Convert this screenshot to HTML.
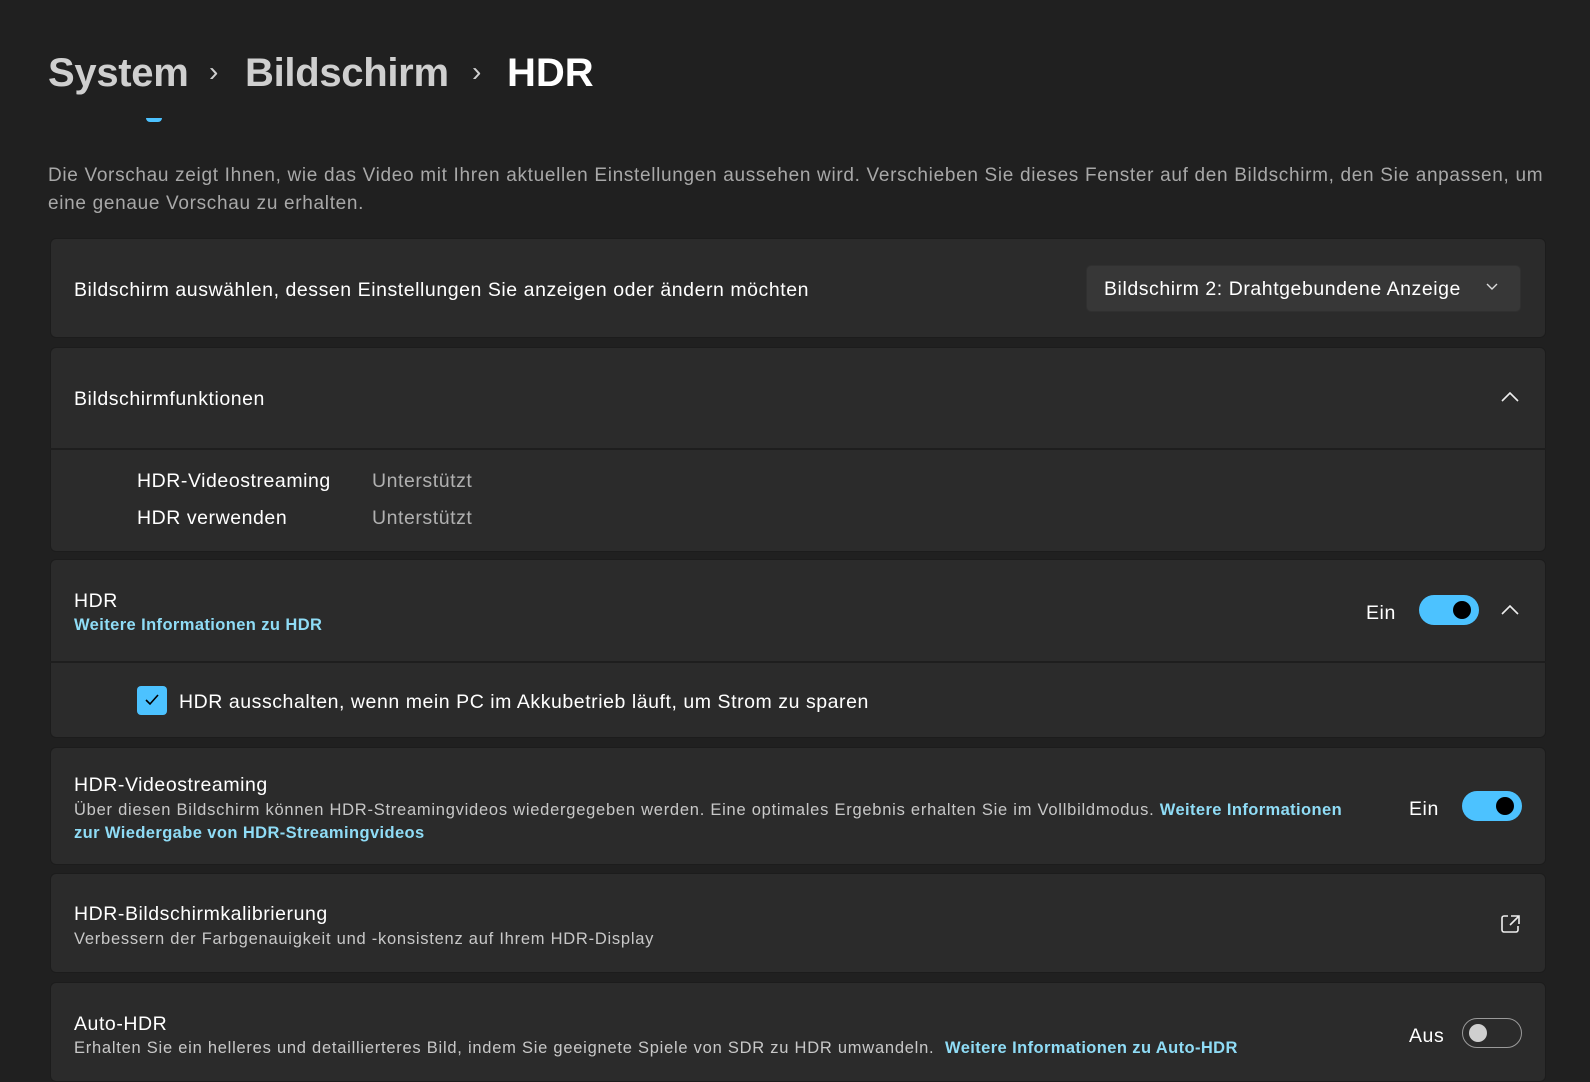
<!DOCTYPE html>
<html><head><meta charset="utf-8"><style>
*{margin:0;padding:0;box-sizing:border-box}
body{width:1590px;height:1062px;background:#202020;font-family:"Liberation Sans",sans-serif;color:#fff;position:relative;overflow:hidden}
.a{position:absolute;white-space:nowrap}
.card{position:absolute;left:50px;width:1496px;background:#2b2b2b;border:1px solid #1c1c1c;border-radius:6px}
.t{font-size:19.5px;color:#fff;letter-spacing:0.55px}
.s{font-size:16.5px;color:#c8c8c8;letter-spacing:0.75px}
.l{color:#8fdcf6;font-weight:bold;letter-spacing:0.4px}
.tog{position:absolute;width:60px;height:30px;border-radius:15px;background:#4cc2ff}
.tog::after{content:"";position:absolute;right:8px;top:6px;width:18px;height:18px;border-radius:50%;background:#000}
.off{background:transparent;border:1.5px solid #9a9a9a}
.off::after{left:6px;right:auto;top:5px;background:#cfcfcf}
.sep{position:absolute;left:50px;width:1496px;height:2px;background:#1e1e1e}
</style></head><body>
<div class="a" style="left:48px;top:51px;font-size:40px;font-weight:bold;color:#cfcfcf;letter-spacing:-0.3px">System</div>
<div class="a" style="left:209px;top:56px;font-size:28px;color:#cfcfcf">›</div>
<div class="a" style="left:245px;top:51px;font-size:40px;font-weight:bold;color:#cfcfcf;letter-spacing:-0.3px">Bildschirm</div>
<div class="a" style="left:472px;top:56px;font-size:28px;color:#cfcfcf">›</div>
<div class="a" style="left:507px;top:51px;font-size:40px;font-weight:bold;color:#fff">HDR</div>
<div class="a" style="left:146px;top:118px;width:16px;height:4px;border-radius:0 0 8px 8px;background:#4cc2ff"></div>
<div class="a" style="left:48px;top:162px;font-size:19px;color:#a8a8a8;line-height:28px;white-space:normal;width:1500px;letter-spacing:0.68px">Die Vorschau zeigt Ihnen, wie das Video mit Ihren aktuellen Einstellungen aussehen wird. Verschieben Sie dieses Fenster auf den Bildschirm, den Sie anpassen, um eine genaue Vorschau zu erhalten.</div>

<div class="card" style="top:238px;height:100px"></div>
<div class="a t" style="left:74px;top:279px">Bildschirm auswählen, dessen Einstellungen Sie anzeigen oder ändern möchten</div>
<div class="a" style="left:1086px;top:265px;width:435px;height:47px;background:#373737;border-radius:5px;border:1px solid #303030"></div>
<div class="a t" style="left:1104px;top:278px">Bildschirm 2: Drahtgebundene Anzeige</div>
<svg class="a" style="left:1485px;top:282px" width="14" height="10"><path d="M2 2l5 5 5-5" stroke="#ddd" stroke-width="1.4" fill="none"/></svg>

<div class="card" style="top:347px;height:205px"></div>
<div class="sep" style="top:448px"></div>
<div class="a t" style="left:74px;top:388px">Bildschirmfunktionen</div>
<svg class="a" style="left:1500px;top:391px" width="20" height="12"><path d="M2 10l8-8 8 8" stroke="#eee" stroke-width="1.6" fill="none"/></svg>
<div class="a t" style="left:137px;top:470px">HDR-Videostreaming</div>
<div class="a t" style="left:137px;top:507px">HDR verwenden</div>
<div class="a t" style="left:372px;top:470px;color:#b0b0b0">Unterstützt</div>
<div class="a t" style="left:372px;top:507px;color:#b0b0b0">Unterstützt</div>

<div class="card" style="top:559px;height:179px"></div>
<div class="sep" style="top:661px"></div>
<div class="a t" style="left:74px;top:590px">HDR</div>
<div class="a s l" style="left:74px;top:616px">Weitere Informationen zu HDR</div>
<div class="a t" style="left:1366px;top:602px">Ein</div>
<div class="tog" style="left:1419px;top:595px"></div>
<div class="a" style="left:1500px;top:603px"><svg width="20" height="12"><path d="M2 10l8-8 8 8" stroke="#eee" stroke-width="1.6" fill="none"/></svg></div>
<div class="a" style="left:137px;top:686px;width:30px;height:29px;border-radius:4px;background:#4cc2ff"></div>
<svg class="a" style="left:144px;top:693px" width="16" height="14"><path d="M2 7l4 4 8-9" stroke="#000" stroke-width="1.6" fill="none"/></svg>
<div class="a t" style="left:179px;top:691px">HDR ausschalten, wenn mein PC im Akkubetrieb läuft, um Strom zu sparen</div>

<div class="card" style="top:747px;height:118px"></div>
<div class="a t" style="left:74px;top:774px">HDR-Videostreaming</div>
<div class="a s" style="left:74px;top:801px">Über diesen Bildschirm können HDR-Streamingvideos wiedergegeben werden. Eine optimales Ergebnis erhalten Sie im Vollbildmodus. <span class="l">Weitere Informationen</span></div>
<div class="a s l" style="left:74px;top:824px">zur Wiedergabe von HDR-Streamingvideos</div>
<div class="a t" style="left:1409px;top:798px">Ein</div>
<div class="tog" style="left:1462px;top:791px"></div>

<div class="card" style="top:873px;height:100px"></div>
<div class="a t" style="left:74px;top:903px">HDR-Bildschirmkalibrierung</div>
<div class="a s" style="left:74px;top:930px">Verbessern der Farbgenauigkeit und -konsistenz auf Ihrem HDR-Display</div>
<svg class="a" style="left:1500px;top:913px" width="22" height="22"><path d="M8 3H4a2 2 0 0 0-2 2v12a2 2 0 0 0 2 2h12a2 2 0 0 0 2-2v-4M11 3h8v8M19 3l-9 9" stroke="#eee" stroke-width="1.6" fill="none"/></svg>

<div class="card" style="top:982px;height:100px"></div>
<div class="a t" style="left:74px;top:1013px">Auto-HDR</div>
<div class="a s" style="left:74px;top:1039px">Erhalten Sie ein helleres und detaillierteres Bild, indem Sie geeignete Spiele von SDR zu HDR umwandeln. &nbsp;<span class="l">Weitere Informationen zu Auto-HDR</span></div>
<div class="a t" style="left:1409px;top:1025px">Aus</div>
<div class="tog off" style="left:1462px;top:1018px"></div>
</body></html>
